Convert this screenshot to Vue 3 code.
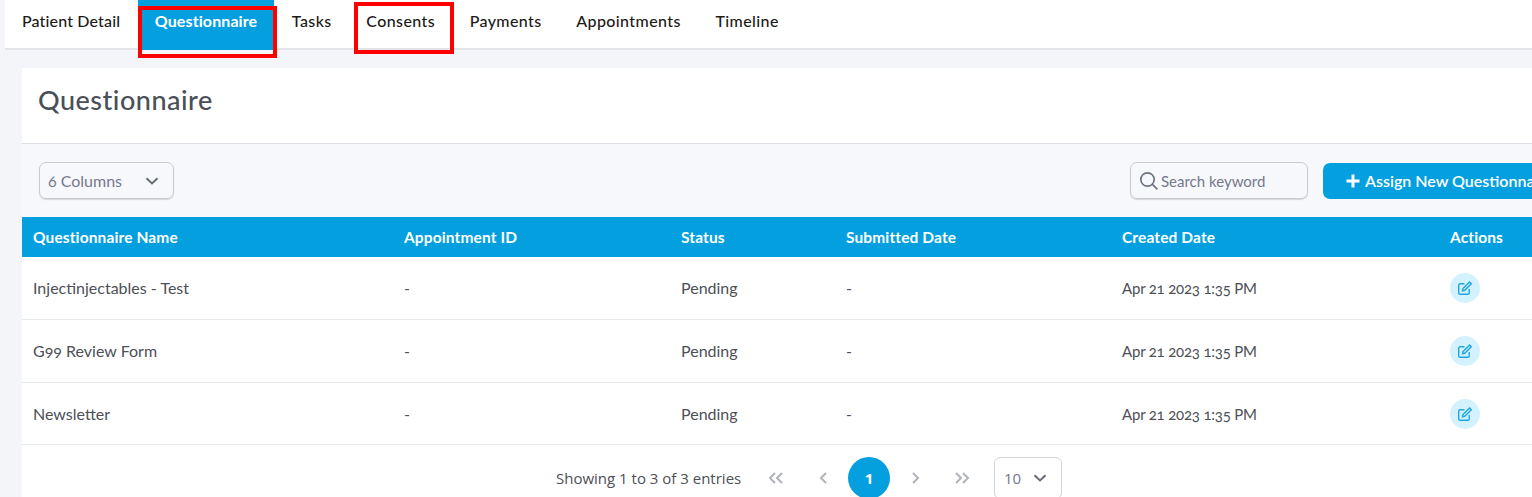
<template>
  <div class="page">
    <!-- tabs -->
    <nav class="tabs">
      <a v-for="tab in tabs" :key="tab" class="tab" :class="{ active: tab === 'Questionnaire' }">{{ tab }}</a>
      <span class="mark mark-questionnaire"></span>
      <span class="mark mark-consents"></span>
    </nav>

    <section class="card">
      <h1 class="title">Questionnaire</h1>

      <div class="toolbar">
        <div class="columns-select">
          <span>6 Columns</span>
          <svg class="chevron" width="14" height="8" viewBox="0 0 14 8"><path d="M1.5 1.2 7 6.4l5.5-5.2" /></svg>
        </div>
        <div class="search">
          <svg width="20" height="20" viewBox="0 0 20 20"><circle cx="8.5" cy="8.5" r="6.7" /><path d="m13.4 13.4 5 5" /></svg>
          <span>Search keyword</span>
        </div>
        <button class="assign">
          <svg width="14" height="14" viewBox="0 0 14 14"><path d="M7 0.5v13M0.5 7h13" /></svg>
          Assign New Questionnaire
        </button>
      </div>

      <div class="row head">
        <div v-for="col in columns" :key="col">{{ col }}</div>
      </div>
      <div v-for="item in rows" :key="item.name" class="row body">
        <div class="text">{{ item.name }}</div>
        <div class="text">-</div>
        <div class="text">Pending</div>
        <div class="text">-</div>
        <div class="date">{{ item.created }}</div>
        <div>
          <span class="edit">
            <svg width="16" height="16" viewBox="0 0 16 16">
              <path d="M12.2 9v4a1.3 1.3 0 0 1-1.3 1.3H3A1.3 1.3 0 0 1 1.7 13V5.1A1.3 1.3 0 0 1 3 3.8h4.5" />
              <path d="M6 8.6 12.6 2l1.7 1.7-6.6 6.6-2.2.5z" />
            </svg>
          </span>
        </div>
      </div>

      <div class="pager">
        <span class="entries">Showing 1 to 3 of 3 entries</span>
        <svg class="arrow first" width="16" height="12" viewBox="0 0 16 12"><path d="M7 1 2 6l5 5M14 1 9 6l5 5" /></svg>
        <svg class="arrow prev" width="9" height="12" viewBox="0 0 9 12"><path d="M7 1 2 6l5 5" /></svg>
        <span class="page-num">1</span>
        <svg class="arrow next" width="9" height="12" viewBox="0 0 9 12"><path d="m2 1 5 5-5 5" /></svg>
        <svg class="arrow last" width="16" height="12" viewBox="0 0 16 12"><path d="m2 1 5 5-5 5M9 1l5 5-5 5" /></svg>
        <div class="size-select">
          <span>10</span>
          <svg class="chevron" width="14" height="8" viewBox="0 0 14 8"><path d="M1.5 1.2 7 6.4l5.5-5.2" /></svg>
        </div>
      </div>
    </section>
  </div>
</template>

<script setup>
const tabs = ['Patient Detail', 'Questionnaire', 'Tasks', 'Consents', 'Payments', 'Appointments', 'Timeline']

const columns = ['Questionnaire Name', 'Appointment ID', 'Status', 'Submitted Date', 'Created Date', 'Actions']

const rows = [
  { name: 'Injectinjectables - Test', created: 'Apr 21 2023 1:35 PM' },
  { name: 'G99 Review Form', created: 'Apr 21 2023 1:35 PM' },
  { name: 'Newsletter', created: 'Apr 21 2023 1:35 PM' }
]
</script>

<style>
html, body {
  margin: 0;
  overflow: hidden;
  background: #f4f5f9;
}
</style>

<style scoped>
.page {
  width: 1532px;
  height: 497px;
  overflow: hidden;
  padding-left: 5px;
  box-sizing: border-box;
  background: #f4f5f9;
  font-family: Lato, "Open Sans", sans-serif;
  font-variant-numeric: oldstyle-nums;
  color: #495057;
}

.tabs {
  position: relative;
  display: flex;
  height: 48px;
  background: #fff;
  border-bottom: 2px solid #e2e4ea;
  gap: 0.6px;
}

.tab {
  height: 50px;
  box-sizing: border-box;
  padding: 12px 17px 0;
  font-size: 16px;
  font-weight: 500;
  line-height: 18px;
  color: #1d1a17;
  letter-spacing: 0.4px;
  white-space: nowrap;
}

.tab:first-child {
  letter-spacing: 0.15px;
}

.tab.active {
  background: #039fdf;
  color: #fff;
  font-weight: 700;
  letter-spacing: 0.1px;
}

.mark {
  position: absolute;
  border: 4px solid #f00;
  box-sizing: border-box;
}

.mark-questionnaire {
  left: 133px;
  top: 6px;
  width: 139px;
  height: 52px;
}

.mark-consents {
  left: 349px;
  top: 2px;
  width: 100px;
  height: 52px;
}

.card {
  margin: 18px 0 0 17px;
  background: #fff;
}

.title {
  margin: 0;
  height: 76px;
  box-sizing: border-box;
  padding: 15px 0 0 16px;
  border-bottom: 1px solid #dcdfe4;
  font-size: 27px;
  line-height: 34px;
  font-weight: 500;
  color: #495057;
  letter-spacing: 0.5px;
}

.toolbar {
  display: flex;
  align-items: center;
  height: 73px;
  padding: 0 0 0 17px;
  background: #f7f8fb;
}

.columns-select,
.search {
  display: flex;
  align-items: center;
  box-sizing: border-box;
  height: 37px;
  border: 1px solid #c9cbcf;
  border-radius: 7px;
  box-shadow: 0 1px 1px #d5d6da;
  font-size: 15px;
  color: #74788d;
}

.columns-select {
  width: 135px;
  padding: 0 14px 0 8px;
  justify-content: space-between;
  font-size: 16px;
}

.chevron path {
  fill: none;
  stroke: #666c76;
  stroke-width: 2;
}

.search {
  width: 178px;
  margin-left: auto;
  padding-left: 8px;
  gap: 2px;
  white-space: nowrap;
}

.search svg {
  fill: none;
  stroke: #6e7480;
  stroke-width: 1.7;
}

.assign {
  display: flex;
  flex: none;
  align-items: center;
  gap: 5px;
  width: 250px;
  height: 36px;
  margin: 0 -41px 0 15px;
  padding: 0 0 0 23px;
  border: 0;
  border-radius: 7px;
  background: #039fdf;
  color: #fff;
  font-family: inherit;
  font-size: 16px;
  font-weight: 600;
  white-space: nowrap;
}

.assign svg {
  stroke: #fff;
  stroke-width: 3;
}

.row {
  display: grid;
  grid-template-columns: 371px 277px 165px 276px 328px 1fr;
  align-items: center;
  padding-left: 11px;
}

.head {
  height: 40px;
  box-sizing: border-box;
  padding-bottom: 1px;
  background: #039fdf;
  color: #fff;
  font-size: 15.5px;
  font-weight: 700;
  letter-spacing: 0.12px;
}

.body {
  height: 63px;
  box-sizing: border-box;
  border-bottom: 1px solid #e8eaed;
  font-size: 16px;
  color: #4d5057;
}

.body:nth-last-child(2) {
  height: 62px;
}

.text {
  padding-bottom: 2px;
}

.body:nth-last-child(2) .text {
  padding-bottom: 0;
}

.date {
  font-size: 15px;
  letter-spacing: -0.2px;
}

.edit {
  display: flex;
  align-items: center;
  justify-content: center;
  width: 30px;
  height: 30px;
  border-radius: 50%;
  background: #d4f1fe;
}

.edit svg {
  fill: none;
  stroke: #1ea6e4;
  stroke-width: 1.4;
}

.pager {
  display: flex;
  align-items: center;
  height: 66px;
  padding-left: 534px;
  box-sizing: border-box;
  font-family: "Open Sans", sans-serif;
  font-variant-numeric: normal;
}

.entries {
  width: 212px;
  font-size: 15px;
  color: #4d5057;
  white-space: nowrap;
}

.arrow {
  flex: none;
  fill: none;
  stroke: #b0b4ba;
  stroke-width: 2;
}

.prev { margin-left: 35px; }

.page-num {
  display: flex;
  flex: none;
  align-items: center;
  justify-content: center;
  width: 42px;
  height: 42px;
  margin-left: 20px;
  border-radius: 50%;
  background: #039fdf;
  color: #fff;
  font-size: 15px;
  font-weight: 700;
}

.next { margin-left: 21px; }
.last { margin-left: 34px; }

.size-select {
  display: flex;
  flex: none;
  align-items: center;
  justify-content: space-between;
  box-sizing: border-box;
  width: 68px;
  height: 42px;
  margin-left: 24px;
  padding: 0 14px 0 9px;
  border: 1px solid #d3d6da;
  border-radius: 6px;
  font-size: 15px;
  color: #74788d;
}
</style>
